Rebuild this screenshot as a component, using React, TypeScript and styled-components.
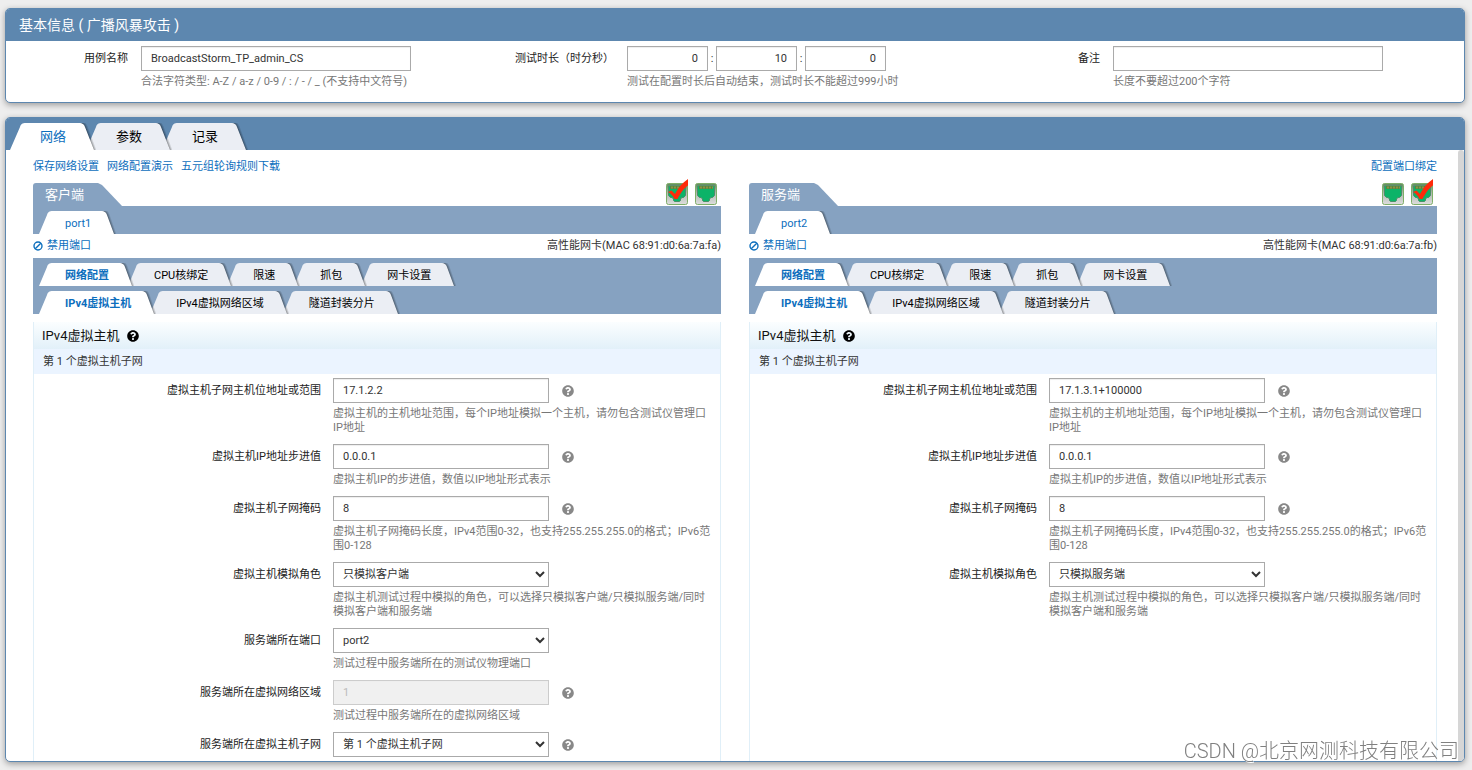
import React, { useId } from "react";
import styled, { createGlobalStyle, css } from "styled-components";
import { FaQuestionCircle } from "react-icons/fa";

const font = `Roboto, "Noto Sans CJK SC", sans-serif`;
const blue = "#5d87af";
const softBlue = "#86a2c1";
const link = "#0c6ebd";

const GlobalStyle = createGlobalStyle`
  *, *::before, *::after { box-sizing: border-box; }
  body { margin: 0; background: #eeeeee; color: #333; font: 11px/14px ${font}; }
  button, input, select { font: inherit; color: inherit; margin: 0; }
`;

const Page = styled.div`
  display: flex;
  flex-direction: column;
  gap: 14px;
  height: 100vh;
  padding: 8px 7px 8px 5px;
`;

const Card = styled.section<{ $fill?: boolean }>`
  border: 1px solid ${blue};
  border-radius: 5px;
  background: #fff;
  box-shadow: 0 2px 6px rgba(0, 0, 0, 0.35);
  overflow: hidden;
  flex: none;
  ${(p) =>
    p.$fill &&
    css`
      flex: 1;
      min-height: 0;
      display: flex;
      flex-direction: column;
    `}
`;

const CardTitle = styled.h1`
  margin: 0;
  padding: 0 13px;
  background: ${blue};
  color: #fff;
  font-size: 14px;
  font-weight: 400;
  line-height: 32px;
`;

const InfoGrid = styled.div`
  display: grid;
  grid-template-columns: repeat(3, 1fr);
  padding: 5px 0 13px;
`;

const InfoField = styled.div`
  display: grid;
  grid-template-columns: 122px 270px;
  column-gap: 13px;
  p {
    white-space: nowrap;
  }
`;

const Label = styled.label`
  color: #222;
  line-height: 25px;
  text-align: right;
  white-space: nowrap;
`;

const Control = styled.div`
  display: flex;
  align-items: center;
`;

const TextInput = styled.input<{ $width: number; $right?: boolean }>`
  display: block;
  width: ${(p) => p.$width}px;
  height: 25px;
  padding: 0 9px;
  border: 1px solid #aaa;
  border-radius: 0;
  background: #fff;
  box-shadow: inset 0 1px 1px #eee;
  text-align: ${(p) => (p.$right ? "right" : "left")};
  &:disabled {
    border-color: #ccc;
    background: #f0f0f0;
    color: #bbb;
  }
`;

const Select = styled.select`
  width: 216px;
  height: 25px;
  padding: 0 0 0 5px;
  border: 1px solid #aaa;
  border-radius: 0;
  background: #fff;
`;

const Colon = styled.span`
  width: 8px;
  text-align: center;
`;

const Hint = styled.p`
  margin: 4px 0 0;
  color: #777;
`;

const TabBar = styled.div<{ $main?: boolean }>`
  display: flex;
  flex: none;
  background: ${(p) => (p.$main ? blue : softBlue)};
  padding: ${(p) => (p.$main ? "5px 4px 0" : "5px 6px 0")};
`;

const TabButton = styled.button<{ $main?: boolean; $active?: boolean; $bold?: boolean; $order: number }>`
  position: relative;
  z-index: ${(p) => p.$order};
  display: flex;
  height: ${(p) => (p.$main ? 27 : 23)}px;
  margin-right: ${(p) => (p.$main ? -10 : -6)}px;
  padding: 0;
  border: 0;
  background: none;
  font-size: ${(p) => (p.$main ? 13 : 11)}px;
  font-weight: ${(p) => (p.$bold ? 700 : 400)};
  line-height: ${(p) => (p.$main ? 28 : 26)}px;
  color: ${(p) => (p.$active ? link : "#000")};
  fill: ${(p) => (p.$active ? "#fff" : "#ebeef4")};
  --tab: ${(p) => (p.$active ? "#fff" : "#ebeef4")};
  white-space: nowrap;
  cursor: pointer;
`;

const TabText = styled.span<{ $main?: boolean }>`
  height: 100%;
  padding: ${(p) => (p.$main ? "0 14px" : "0 11px 0 12px")};
  background: var(--tab);
`;

const Cap = styled.svg`
  flex: none;
  display: block;
  overflow: hidden;
`;

function Tab({ label, active, bold, main, order }: { label: string; active?: boolean; bold?: boolean; main?: boolean; order: number }) {
  const w = main ? 16 : 14;
  const h = main ? 27 : 23;
  const left = `M${w} 0 C${w - 4} 0 ${w - 5} 1 ${w - 6} 4 L0 ${h} H${w} Z`;
  const edge = `M-3 0 C2 0 4 1 5 4 L${w - 2} ${h + 1}`;
  return (
    <TabButton type="button" $main={main} $active={active} $bold={bold} $order={order}>
      <Cap width={w} height={h} aria-hidden="true">
        <path d={left} />
      </Cap>
      <TabText $main={main}>{label}</TabText>
      <Cap width={w} height={h} aria-hidden="true">
        <path d={edge} fill="none" stroke="#000" strokeOpacity="0.12" strokeWidth="5" />
        <path d={edge} fill="none" stroke="#000" strokeOpacity="0.18" strokeWidth="3" />
        <path d={edge} fill="none" stroke="#000" strokeOpacity="0.25" strokeWidth="1" />
        <path d={`M0 0 C2 0 4 1 5 4 L${w - 2} ${h} H0 Z`} />
      </Cap>
    </TabButton>
  );
}

function Tabs({ items, main, bold }: { items: string[]; main?: boolean; bold?: boolean }) {
  return (
    <TabBar $main={main}>
      {items.map((t, i) => (
        <Tab key={t} label={t} main={main} active={i === 0} bold={bold && i === 0} order={items.length - i} />
      ))}
    </TabBar>
  );
}

const Body = styled.div`
  display: flex;
  flex: 1;
  min-height: 0;
`;

const Scroller = styled.div`
  display: flex;
  flex-direction: column;
  flex: 1;
  min-width: 0;
  overflow-y: auto;
  scrollbar-width: none;
  padding: 0 21px 0 27px;
`;

const ScrollThumb = styled.div`
  width: 6px;
  border-radius: 3px 3px 0 0;
  background: #d6d6d6;
`;

const LinkRow = styled.div`
  display: flex;
  flex: none;
  gap: 8px;
  line-height: 34px;
  height: 33px;
`;

const TextLink = styled.a<{ $end?: boolean }>`
  color: ${link};
  text-decoration: none;
  margin-left: ${(p) => (p.$end ? "auto" : 0)};
`;

const Sides = styled.div`
  display: grid;
  grid-template-columns: 1fr 1fr;
  gap: 28px;
`;

const SidePanel = styled.div`
  display: flex;
  flex-direction: column;
`;

const SideHead = styled.div`
  display: flex;
  justify-content: space-between;
  align-items: flex-end;
  height: 23px;
`;

const SideName = styled.h2`
  margin: 0;
  height: 23px;
  padding: 0 38px 0 12px;
  background: ${softBlue};
  color: #fff;
  font-size: 13px;
  font-weight: 400;
  line-height: 24px;
  border-top-left-radius: 3px;
  clip-path: polygon(0 0, calc(100% - 24px) 0, calc(100% - 20px) 2px, 100% 100%, 0 100%);
`;

const PortIcons = styled.div`
  display: flex;
  gap: 7px;
  padding: 0 4px 1px 0;
`;

const PortButton = styled.button`
  display: block;
  padding: 0;
  border: 0;
  background: none;
  cursor: pointer;
  svg {
    display: block;
    overflow: visible;
  }
`;

function PortIcon({ checked }: { checked?: boolean }) {
  const id = useId();
  return (
    <PortButton type="button" aria-label={checked ? "已选端口" : "端口"}>
      <svg width="22" height="22" viewBox="0 0 22 22">
        <defs>
          <linearGradient id={id} x1="0" y1="0" x2="0" y2="1">
            <stop offset="0" stopColor="#5f8a5c" />
            <stop offset="0.5" stopColor="#b4bdb4" />
            <stop offset="1" stopColor="#dedede" />
          </linearGradient>
        </defs>
        <rect x="0.5" y="0.5" width="21" height="21" rx="2" fill={`url(#${id})`} stroke="#7fae68" />
        <path d="M2.5 3H19.5V12.500L17.500 14.500H16L14.500 16V17.500L13.500 18.500H8.500L7.500 17.500V16L6 14.500H4.500L2.500 12.500Z" fill="#0cb368" stroke="#4a8f68" />
        <path d="M4 4.5H18" stroke="#55853f" strokeWidth="3" />
        <path d="M5 4.5H18" stroke="#8f8f45" strokeWidth="2" strokeDasharray="2 1" />
        {checked && <path d="M2 9L5.5 7.500L9 11C12 5 16 0 22 -4V2.5C18 5 14 11 11.5 16H8.5C7 13 5 10.5 2 9Z" fill="#ff2a0a" />}
      </svg>
    </PortButton>
  );
}

const StatusRow = styled.div`
  display: flex;
  justify-content: space-between;
  height: 24px;
  line-height: 24px;
`;

const DisableButton = styled.button`
  display: flex;
  align-items: center;
  gap: 4px;
  padding: 0;
  border: 0;
  background: none;
  color: ${link};
  cursor: pointer;
`;

const Section = styled.section`
  flex: 1;
  margin-top: 8px;
  border: solid #e0eff8;
  border-width: 0 1px;
`;

const SectionTitle = styled.h3`
  display: flex;
  align-items: center;
  gap: 8px;
  height: 27px;
  margin: 0;
  padding-left: 8px;
  background: linear-gradient(#fbfeff, #e2f0f9);
  color: #111;
  font-size: 13px;
  font-weight: 400;
`;

const SubTitle = styled.h4`
  height: 25px;
  margin: 0;
  padding-left: 9px;
  background: #ebf4ff;
  font-weight: 400;
  line-height: 26px;
`;

const Form = styled.form`
  display: flex;
  flex-direction: column;
  gap: 9px;
  padding: 4px 0 10px;
`;

const FormRow = styled.div`
  display: grid;
  grid-template-columns: 287fr 387fr;
  column-gap: 12px;
  p {
    max-width: 380px;
  }
`;

const Help = styled.button`
  display: block;
  height: 13px;
  margin-left: 13px;
  padding: 0;
  border: 0;
  background: none;
  color: #888;
  cursor: help;
  svg {
    display: block;
  }
`;

const Watermark = styled.div`
  position: fixed;
  right: 13px;
  bottom: 6px;
  font-size: 20px;
  line-height: 26px;
  font-weight: 300;
  color: #808080;
  text-shadow: 1px 1px 0 #fff;
  pointer-events: none;
`;

type Row = { label: string; value: string; hint: string; kind?: "select" | "disabled"; help?: boolean };

const addressRows = (address: string, role: string): Row[] => [
  { label: "虚拟主机子网主机位地址或范围", value: address, hint: "虚拟主机的主机地址范围，每个IP地址模拟一个主机，请勿包含测试仪管理口IP地址", help: true },
  { label: "虚拟主机IP地址步进值", value: "0.0.0.1", hint: "虚拟主机IP的步进值，数值以IP地址形式表示", help: true },
  { label: "虚拟主机子网掩码", value: "8", hint: "虚拟主机子网掩码长度，IPv4范围0-32，也支持255.255.255.0的格式；IPv6范围0-128", help: true },
  { label: "虚拟主机模拟角色", value: role, hint: "虚拟主机测试过程中模拟的角色，可以选择只模拟客户端/只模拟服务端/同时模拟客户端和服务端", kind: "select" },
];

const clientRows: Row[] = [
  ...addressRows("17.1.2.2", "只模拟客户端"),
  { label: "服务端所在端口", value: "port2", hint: "测试过程中服务端所在的测试仪物理端口", kind: "select" },
  { label: "服务端所在虚拟网络区域", value: "1", hint: "测试过程中服务端所在的虚拟网络区域", kind: "disabled", help: true },
  { label: "服务端所在虚拟主机子网", value: "第 1 个虚拟主机子网", hint: "", kind: "select", help: true },
];

const serverRows = addressRows("17.1.3.1+100000", "只模拟服务端");

function Field({ row, id }: { row: Row; id: string }) {
  return (
    <FormRow>
      <Label htmlFor={id}>{row.label}</Label>
      <div>
        <Control>
          {row.kind === "select" ? (
            <Select id={id} defaultValue={row.value}>
              <option>{row.value}</option>
            </Select>
          ) : (
            <TextInput id={id} $width={216} defaultValue={row.value} disabled={row.kind === "disabled"} />
          )}
          {row.help && (
            <Help type="button" aria-label="帮助">
              <FaQuestionCircle size={12} />
            </Help>
          )}
        </Control>
        {row.hint && <Hint>{row.hint}</Hint>}
      </div>
    </FormRow>
  );
}

function Side({ name, port, mac, rows, checkedFirst }: { name: string; port: string; mac: string; rows: Row[]; checkedFirst?: boolean }) {
  return (
    <SidePanel>
      <SideHead>
        <SideName>{name}</SideName>
        <PortIcons>
          <PortIcon checked={checkedFirst} />
          <PortIcon checked={!checkedFirst} />
        </PortIcons>
      </SideHead>
      <Tabs items={[port]} />
      <StatusRow>
        <DisableButton type="button">
          <svg width="10" height="10" viewBox="0 0 10 10" fill="none" stroke="currentColor" strokeWidth="1.4" aria-hidden="true">
            <circle cx="5" cy="5" r="4" />
            <path d="M2.200 7.800L7.800 2.200" />
          </svg>
          禁用端口
        </DisableButton>
        <span>高性能网卡(MAC {mac})</span>
      </StatusRow>
      <Tabs bold items={["网络配置", "CPU核绑定", "限速", "抓包", "网卡设置"]} />
      <Tabs bold items={["IPv4虚拟主机", "IPv4虚拟网络区域", "隧道封装分片"]} />
      <Section>
        <SectionTitle>
          IPv4虚拟主机
          <FaQuestionCircle size={12} color="#000" />
        </SectionTitle>
        <SubTitle>第 1 个虚拟主机子网</SubTitle>
        <Form>
          {rows.map((r, i) => (
            <Field key={r.label} row={r} id={`${port}-${i}`} />
          ))}
        </Form>
      </Section>
    </SidePanel>
  );
}

export default function App() {
  return (
    <>
      <GlobalStyle />
      <Page>
        <Card>
          <CardTitle>基本信息 ( 广播风暴攻击 )</CardTitle>
          <InfoGrid>
            <InfoField>
              <Label htmlFor="case-name">用例名称</Label>
              <div>
                <TextInput id="case-name" $width={270} defaultValue="BroadcastStorm_TP_admin_CS" />
                <Hint>合法字符类型: A-Z / a-z / 0-9 / : / - / _ (不支持中文符号)</Hint>
              </div>
            </InfoField>
            <InfoField>
              <Label htmlFor="hours">测试时长（时分秒）</Label>
              <div>
                <Control>
                  <TextInput id="hours" $width={81} $right defaultValue="0" />
                  <Colon>:</Colon>
                  <TextInput aria-label="分" $width={81} $right defaultValue="10" />
                  <Colon>:</Colon>
                  <TextInput aria-label="秒" $width={81} $right defaultValue="0" />
                </Control>
                <Hint>测试在配置时长后自动结束，测试时长不能超过999小时</Hint>
              </div>
            </InfoField>
            <InfoField>
              <Label htmlFor="remark">备注</Label>
              <div>
                <TextInput id="remark" $width={270} defaultValue="" />
                <Hint>长度不要超过200个字符</Hint>
              </div>
            </InfoField>
          </InfoGrid>
        </Card>
        <Card $fill>
          <Tabs main items={["网络", "参数", "记录"]} />
          <Body>
            <Scroller>
              <LinkRow>
                <TextLink href="#save">保存网络设置</TextLink>
                <TextLink href="#demo">网络配置演示</TextLink>
                <TextLink href="#rules">五元组轮询规则下载</TextLink>
                <TextLink href="#bind" $end>
                  配置端口绑定
                </TextLink>
              </LinkRow>
              <Sides>
                <Side name="客户端" port="port1" mac="68:91:d0:6a:7a:fa" rows={clientRows} checkedFirst />
                <Side name="服务端" port="port2" mac="68:91:d0:6a:7a:fb" rows={serverRows} />
              </Sides>
            </Scroller>
            <ScrollThumb />
          </Body>
        </Card>
      </Page>
      <Watermark>CSDN @北京网测科技有限公司</Watermark>
    </>
  );
}
